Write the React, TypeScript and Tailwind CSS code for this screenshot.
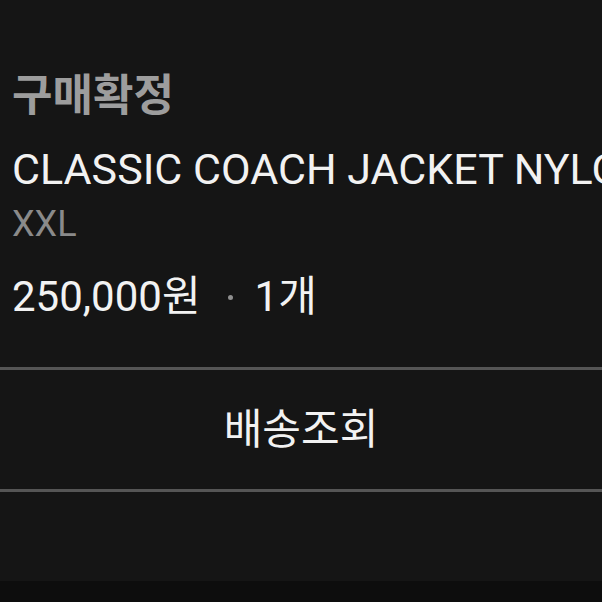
const sans = "font-['Roboto','Noto_Sans_CJK_KR',sans-serif]";

export default function App() {
  return (
    <div className={`flex h-[602px] w-[602px] flex-col overflow-hidden bg-[#151515] ${sans}`}>
      <section className="pl-3 pt-[74px]">
        <h2 className="text-[44px] font-bold leading-none text-[#9d9d9d]">구매확정</h2>
        <p className="mt-[30px] whitespace-nowrap text-[43px] leading-none text-[#f2f2f2]">
          CLASSIC COACH JACKET NYLON BLACK
        </p>
        <p className="mt-[15px] text-[36px] leading-none text-[#8a8a8a]">XXL</p>
        <p className="mt-[32px] flex items-center whitespace-nowrap text-[42px] leading-[1.1] text-[#f2f2f2]">
          <span>250,000원</span>
          <span className="ml-[27px] mr-[22px] h-[5px] w-[5px] rounded-full bg-[#8f8f8f]" />
          <span>1개</span>
        </p>
      </section>

      <div className="mt-[47px] h-[3px] bg-[#555555]" />
      <button className="flex h-[119px] items-center justify-center text-[42px] leading-none text-[#f2f2f2]">
        배송조회
      </button>
      <div className="h-[3px] bg-[#555555]" />

      <div className="flex-1" />
      <div className="h-[21px] bg-[#0d0d0d]" />
    </div>
  );
}
